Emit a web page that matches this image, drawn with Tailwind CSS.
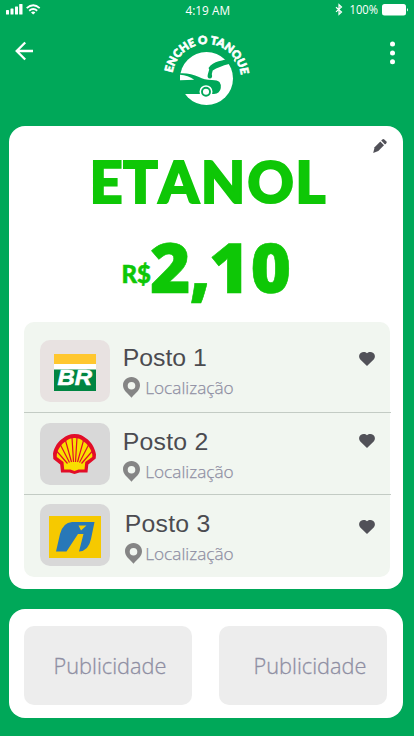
<!DOCTYPE html>
<html lang="pt-BR">
<head>
<meta charset="utf-8">
<meta name="viewport" content="width=device-width, initial-scale=1">
<title>Enche o Tanque</title>
<script src="https://cdn.jsdelivr.net/npm/@tailwindcss/browser@4"></script>
</head>
<body class="w-[414px] h-[736px] overflow-hidden bg-[#00a859] font-['Open_Sans',sans-serif]">
<div class="flex flex-col h-[736px]">
  <!-- Status bar -->
  <div class="h-5 flex justify-between pl-[6px] pr-[5px] text-white shrink-0">
    <svg class="w-[90px] h-[20px]" viewBox="0 -4 90 20" fill="#fff"><rect x="0" y="6" width="3" height="4.500" rx=".6"/><rect x="4.500" y="4.500" width="3" height="6" rx=".6"/><rect x="9" y="2.500" width="3" height="8" rx=".6"/><rect x="13.200" y="0" width="3.300" height="10.500" rx=".6"/><g fill="none" stroke="#fff" stroke-width="1.800"><path d="M20.700 4.200Q27.200-1.600 33.700 4.200"/><path d="M23.200 6.700Q27.200 3.200 31.200 6.700"/></g><path d="M25 8.400Q27.200 6.700 29.400 8.400L27.200 10.600Z"/></svg>
    <svg class="w-[60px] h-[20px]" viewBox="0 -4 60 20"><text x="7.500" y="11" font-size="12.500" textLength="44.500" lengthAdjust="spacingAndGlyphs" fill="#fff">4:19 AM</text></svg>
    <svg class="w-[90px] h-[20px]" viewBox="0 -4 90 20"><path d="M17 3.300L22.500 8 20 10.300V.7L22.500 3 17 7.900" fill="none" stroke="#fff" stroke-width="1.200"/><text x="30.500" y="10" font-size="12.300" textLength="28.500" lengthAdjust="spacingAndGlyphs" fill="#fff">100%</text><rect x="63" y="0" width="24" height="11.600" rx="2.500" fill="#fff"/><path d="M88 4Q90 5.800 88 7.600Z" fill="#fff"/></svg>
  </div>
  <!-- Header -->
  <header class="h-[106px] flex justify-between px-[14px] shrink-0">
    <svg class="w-[60px] h-[60px]" viewBox="14 20 60 60" fill="none" stroke="#fff" stroke-width="2.300"><path d="M25.200 42.500L16.700 51 25.200 59.500M16.700 51H33"/></svg>
    <svg class="w-[100px] h-[90px]" viewBox="157 20 100 90">
      <defs><path id="arc" d="M172 78.500A34.500 34.500 0 0 1 241 78.500"/></defs>
      <text font-family="Lato" font-weight="900" font-size="11.300" fill="#fff" stroke="#fff" stroke-width=".7"><textPath href="#arc" startOffset="5.500" textLength="99" lengthAdjust="spacing">ENCHE O TANQUE</textPath></text>
      <circle cx="206.500" cy="78.500" r="26.500" fill="#fff"/>
      <path d="M179 73.300Q190 72.500 199 77Q204 79.800 212 80Q217.500 80.200 219.500 82Q221.300 84.500 220.800 88Q220 93.500 214 94H179Z" fill="#00a859"/>
      <path d="M180 74.700Q188 75 194.200 79.700L180 80.300Z" fill="#fff"/>
      <path d="M235 57.500Q233 63 229 64Q219 66.500 212.700 70.500L211.800 74Q213 78.300 209.800 78.500Q206.800 78.200 207.800 74.500L209.200 69.500Q208 67.500 210.500 65.500Q215 61.500 222 60.500L230 58Z" fill="#00a859"/>
      <circle cx="206" cy="91.700" r="8" fill="#00a859"/><path d="M196 94H217V102H196Z" fill="#fff"/><circle cx="206" cy="91.700" r="6.500" fill="#fff"/><circle cx="206" cy="91.700" r="4" fill="none" stroke="#00a859" stroke-width="1.900"/>
    </svg>
    <svg class="w-[60px] h-[60px]" viewBox="340 20 60 60" fill="#fff"><circle cx="392.500" cy="44" r="2.500"/><circle cx="392.500" cy="53" r="2.500"/><circle cx="392.500" cy="61.700" r="2.500"/></svg>
  </header>
  <!-- Price card -->
  <main class="ml-[9px] w-[394px] h-[463px] bg-white rounded-[16px] shrink-0">
    <svg class="w-[394px] h-[196px] block" viewBox="9 126 394 196" font-family="Lato" font-weight="900" fill="#0ec706">
      <g fill="#515158"><path d="M373.200 152.900L374.600 147.200 380.300 141.500 384 145.300 378.300 151Z"/><path d="M381.200 140.600L382.300 139.500Q383.300 138.600 384.300 139.400L386.400 141.500Q387.200 142.400 386.300 143.300L385 144.500Z"/></g>
      <text y="203.300" font-size="57" stroke="#0ec706" stroke-width="2.200" x="89.700 123.200 158.800 201 247.500 295.500">ETANOL</text>
      <text x="121.500" y="283" font-size="25" stroke="#0ec706" stroke-width=".5" textLength="29.500" lengthAdjust="spacingAndGlyphs">R$</text>
      <text y="293" font-family="Open Sans" font-weight="800" font-size="69.500" stroke="#0ec706" stroke-width=".6" x="150 189.500 209 250.500">2,10</text>
    </svg>
    <div class="ml-[15px] w-[366px] h-[255px] bg-[#f1f6f0] rounded-[10px] text-[#4b4b50] font-['Liberation_Sans',sans-serif]">
      <section class="flex w-[367px] h-[91px] border-b border-[#c3cbc4]">
        <div class="ml-4 mt-[18px] w-[70px] h-[62px] rounded-[10px] bg-[#e8e2e1] pl-[13.500px] pt-[14px]">
          <svg class="w-[42px] h-[37px]" viewBox="0 0 42 37"><path d="M0 0H42V37H0Z" fill="#fff"/><path d="M0 0H42V10H0Z" fill="#ffc72f"/><path d="M0 15.500H42V37H0Z" fill="#008542"/><text x="3.500" y="31" font-family="Liberation Sans" font-size="22.500" font-weight="700" font-style="italic" textLength="34.500" lengthAdjust="spacingAndGlyphs" fill="#fff" stroke="#fff" stroke-width=".6">BR</text></svg>
        </div>
        <svg class="w-[220px] h-[90px]" viewBox="110 322 220 90"><text x="122.700" y="366" font-size="24.800" textLength="84" fill="#4b4b50">Posto 1</text><path fill-rule="evenodd" d="M131.500 377C126.500 377 123 380.700 123 385.300C123 390.500 127.500 393 131.500 397.800C135.500 393 140 390.500 140 385.300C140 380.700 136.500 377 131.500 377ZM131.500 382A3.800 3.800 0 1 1 131.500 389.600A3.800 3.800 0 0 1 131.500 382Z" fill="#858585"/><text x="145.200" y="394" font-family="Open Sans" font-weight="300" font-size="17" textLength="88.500" lengthAdjust="spacingAndGlyphs" fill="#8f8fa3" stroke="#8f8fa3" stroke-width=".25">Localização</text></svg>
        <svg class="w-4 h-[14px] ml-[29px] mt-[29.500px]" viewBox="0 0 16 14"><path d="M8 14L1.300 7.500C-.5 5.500-.2 2.500 1.700 1C3.700-.5 6.500-.2 8 1.300C9.500-.2 12.300-.5 14.300 1C16.200 2.500 16.500 5.500 14.700 7.500Z" fill="#515158"/></svg>
      </section>
      <section class="flex w-[367px] h-[82px] border-b border-[#c3cbc4]">
        <div class="ml-4 mt-[10px] w-[70px] h-[62px] rounded-[10px] bg-[#d8d8d8] pl-[13px] pt-[10.500px]">
          <svg class="w-[43px] h-[40px]" viewBox="0 0 43 40"><path d="M21.500 0C27 0 30.500 2 33 4.300C38 7.500 42 14 43 20.500L42.700 24.500 35.300 30.500 34.500 38.500H26.500L21.500 40 16.500 38.500H8L7.200 30.500.300 25 0 19.500C1.300 13 5 7.500 10 4.300C13 1.700 16.500 0 21.500 0Z" fill="#e20d28"/><path d="M21.500 4C25 4 28 5 30 7C34.500 10 38 14.500 39.300 20.500V23L32.300 28 31.500 35.500H25.500L21.500 37 17.500 35.500H11.200L10.500 28 3.800 23V20.500C5 14.500 8.500 10 13 7C15.500 5 18 4 21.500 4Z" fill="#f9df00"/><g stroke="#e20d28" stroke-width="1.200"><path d="M20.500 28L19 3.500M22.500 28L24 3.500M18.500 28L12.500 6.500M24.500 28L30.500 6.500M16.500 28.500L7.500 11M26.500 28.500L35.500 11M14.500 29.500L4 17.500M28.500 29.500L39 17.500"/></g></svg>
        </div>
        <svg class="w-[220px] h-[80px]" viewBox="110 413 220 80"><text x="122.700" y="450" font-size="24.800" textLength="85.500" fill="#4b4b50">Posto 2</text><path fill-rule="evenodd" transform="translate(0 84)" d="M131.500 377C126.500 377 123 380.700 123 385.300C123 390.500 127.500 393 131.500 397.800C135.500 393 140 390.500 140 385.300C140 380.700 136.500 377 131.500 377ZM131.500 382A3.800 3.800 0 1 1 131.500 389.600A3.800 3.800 0 0 1 131.500 382Z" fill="#858585"/><text x="145.200" y="478" font-family="Open Sans" font-weight="300" font-size="17" textLength="88.500" lengthAdjust="spacingAndGlyphs" fill="#8f8fa3" stroke="#8f8fa3" stroke-width=".25">Localização</text></svg>
        <svg class="w-4 h-[14px] ml-[29px] mt-[20.500px]" viewBox="0 0 16 14"><path d="M8 14L1.300 7.500C-.5 5.500-.2 2.500 1.700 1C3.700-.5 6.500-.2 8 1.300C9.500-.2 12.300-.5 14.300 1C16.200 2.500 16.500 5.500 14.700 7.500Z" fill="#515158"/></svg>
      </section>
      <section class="flex w-[367px] h-[82px]">
        <div class="ml-4 mt-[9px] w-[70px] h-[62px] rounded-[10px] bg-[#d8d8d8] pl-[9px] pt-[12px]">
          <svg class="w-[52px] h-[42px]" viewBox="0 0 52 42"><path d="M0 0H52V42H0Z" fill="#f6c900"/><path fill-rule="evenodd" d="M7 35.500L11 18Q14 6.500 23 6H45.500L42 23Q39.500 35 30 35.500L34.500 18H29L17.500 35.500ZM29.500 9.500L32 14.500 37.500 9.500Z" fill="#2878b8"/></svg>
        </div>
        <svg class="w-[220px] h-[82px]" viewBox="110 495 220 82"><text x="124.700" y="532" font-size="24.800" textLength="85.500" fill="#4b4b50">Posto 3</text><path fill-rule="evenodd" transform="translate(2 166)" d="M131.500 377C126.500 377 123 380.700 123 385.300C123 390.500 127.500 393 131.500 397.800C135.500 393 140 390.500 140 385.300C140 380.700 136.500 377 131.500 377ZM131.500 382A3.800 3.800 0 1 1 131.500 389.600A3.800 3.800 0 0 1 131.500 382Z" fill="#858585"/><text x="145.200" y="560" font-family="Open Sans" font-weight="300" font-size="17" textLength="88.500" lengthAdjust="spacingAndGlyphs" fill="#8f8fa3" stroke="#8f8fa3" stroke-width=".25">Localização</text></svg>
        <svg class="w-4 h-[14px] ml-[29px] mt-[24.500px]" viewBox="0 0 16 14"><path d="M8 14L1.300 7.500C-.5 5.500-.2 2.500 1.700 1C3.700-.5 6.500-.2 8 1.300C9.500-.2 12.300-.5 14.300 1C16.200 2.500 16.500 5.500 14.700 7.500Z" fill="#515158"/></svg>
      </section>
    </div>
  </main>
  <!-- Advertising -->
  <footer class="ml-[9px] mt-[19.500px] w-[394px] h-[109px] bg-white rounded-[16px] flex gap-[27px] pl-[15px] pt-[17px] shrink-0">
    <div class="w-[168px] h-[79.500px] rounded-[10px] bg-[#ededed]"><svg class="w-[168px] h-[79px]" viewBox="24 625.500 168 79"><text x="53.500" y="673.500" font-weight="300" font-size="21.700" textLength="113" lengthAdjust="spacingAndGlyphs" fill="#8f8fa3" stroke="#8f8fa3" stroke-width=".3">Publicidade</text></svg></div>
    <div class="w-[168px] h-[79.500px] rounded-[10px] bg-[#ededed]"><svg class="w-[168px] h-[79px]" viewBox="219 625.500 168 79"><text x="253.500" y="673.500" font-weight="300" font-size="21.700" textLength="113" lengthAdjust="spacingAndGlyphs" fill="#8f8fa3" stroke="#8f8fa3" stroke-width=".3">Publicidade</text></svg></div>
  </footer>
</div>
</body>
</html>
